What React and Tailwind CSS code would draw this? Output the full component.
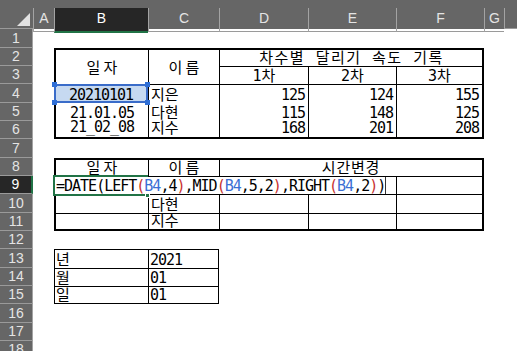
import React from "react";

const cellFont =
  "font-['DejaVu_Sans_Mono','Noto_Sans_CJK_KR',monospace] text-[15px] leading-[16px] text-black whitespace-nowrap";
const headFont = "font-['Liberation_Sans','Noto_Sans',sans-serif] text-[14px]";

const rowStart = [
  "row-start-2", "row-start-3", "row-start-4", "row-start-5", "row-start-6", "row-start-7",
  "row-start-8", "row-start-9", "row-start-10", "row-start-11", "row-start-12", "row-start-13",
  "row-start-14", "row-start-15", "row-start-16", "row-start-17", "row-start-18", "row-start-19",
];

const num = "tracking-[-1px]";
const ko = "tracking-[0px]";
const koHead = "tracking-[3.3px] pl-[3px]";

function Cell({ className = "", children }) {
  return <div className={`flex border-black ${cellFont} ${className}`}>{children}</div>;
}

function ColHead({ className = "", label, active }) {
  return (
    <div className={`row-start-1 flex flex-col bg-[#666666] pt-[8px] ${className}`}>
      <div
        className={`flex flex-1 items-center justify-center border-l border-l-[#a3a3a3] pb-[2px] ${headFont} ${
          active
            ? "bg-[#262626] text-white border-b-2 border-b-[#217346]"
            : "text-[#e4e4e4] border-b border-b-[#9a9a9a]"
        }`}
      >
        {label}
      </div>
    </div>
  );
}

function RowHead({ n }) {
  const active = n === 9;
  return (
    <div
      className={`col-start-1 flex items-center justify-center border-b border-b-[#9a9a9a] ${headFont} ${rowStart[n - 1]} ${
        active
          ? "bg-[#262626] text-white border-r-2 border-r-[#217346]"
          : "bg-[#666666] text-[#e4e4e4] border-r border-r-[#a3a3a3]"
      }`}
    >
      {n}
    </div>
  );
}

function Handle({ className }) {
  return <div className={`absolute h-[5px] w-[5px] bg-[#2f6fd6] ${className}`} />;
}

const red = "text-[#c8312f]";
const blue = "text-[#3b6fd4]";

export default function App() {
  const rows = Array.from({ length: 18 }, (_, i) => i + 1);
  return (
    <div className="grid h-[351px] w-[517px] overflow-hidden bg-white grid-cols-[33px_21px_94px_71px_89px_88px_88px_20px_1fr] grid-rows-[29px_19px_18px_18px_19px_18px_18px_19px_18px_18px_19px_18px_18px_19px_18px_18px_19px_18px_18px]">
      {/* corner */}
      <div className="col-start-1 row-start-1 flex flex-col bg-[#666666] pt-[8px]">
        <div className="flex flex-1 items-end justify-end border-b border-b-[#9a9a9a] pb-[2px] pr-[3px]">
          <svg width="13" height="13" viewBox="0 0 13 13">
            <polygon points="13,0 13,13 0,13" fill="#e2e2e2" />
          </svg>
        </div>
      </div>
      <ColHead className="col-start-2" label="A" />
      <ColHead className="col-start-3" label="B" active />
      <ColHead className="col-start-4" label="C" />
      <ColHead className="col-start-5" label="D" />
      <ColHead className="col-start-6" label="E" />
      <ColHead className="col-start-7" label="F" />
      <ColHead className="col-start-8" label="G" />
      <ColHead className="col-start-9" label="" />

      {rows.map((n) => (
        <RowHead key={n} n={n} />
      ))}

      {/* 차수별 기록 표 */}
      <Cell className={`col-start-3 row-start-3 row-span-2 border-t-2 border-l-2 items-center justify-center pt-[2px] ${koHead}`}>일자</Cell>
      <Cell className={`col-start-4 row-start-3 row-span-2 border-t-2 border-l items-center justify-center pt-[2px] ${koHead}`}>이름</Cell>
      <Cell className="col-start-5 col-span-3 row-start-3 border-t-2 border-l border-r-2 items-center justify-center tracking-[1.5px] pl-[1px]">
        차수별 달리기 속도 기록
      </Cell>
      <Cell className="col-start-5 row-start-4 border-t border-l items-center justify-center">1차</Cell>
      <Cell className="col-start-6 row-start-4 border-t border-l items-center justify-center">2차</Cell>
      <Cell className="col-start-7 row-start-4 border-t border-l border-r-2 items-center justify-center">3차</Cell>

      <Cell className={`col-start-3 row-start-5 relative bg-[#c6d9f1] items-end justify-center ${num}`}>
        20210101
        <div className="absolute inset-0 border-2 border-[#3a6cc9]" />
        <Handle className="left-[-2px] top-[-2px]" />
        <Handle className="right-[-2px] top-[-2px]" />
        <Handle className="left-[-2px] bottom-[-2px]" />
        <Handle className="right-[-2px] bottom-[-2px]" />
      </Cell>
      <Cell className={`col-start-4 row-start-5 border-t border-l items-end pl-[2px] ${ko}`}>지은</Cell>
      <Cell className={`col-start-5 row-start-5 border-t border-l items-end justify-end pr-[3px] ${num}`}>125</Cell>
      <Cell className={`col-start-6 row-start-5 border-t border-l items-end justify-end pr-[3px] ${num}`}>124</Cell>
      <Cell className={`col-start-7 row-start-5 border-t border-l border-r-2 items-end justify-end pr-[3px] ${num}`}>155</Cell>

      <Cell className={`col-start-3 row-start-6 border-l-2 items-end justify-center ${num}`}>21.01.05</Cell>
      <Cell className={`col-start-4 row-start-6 border-l items-end pl-[2px] ${ko}`}>다현</Cell>
      <Cell className={`col-start-5 row-start-6 border-l items-end justify-end pr-[3px] ${num}`}>115</Cell>
      <Cell className={`col-start-6 row-start-6 border-l items-end justify-end pr-[3px] ${num}`}>148</Cell>
      <Cell className={`col-start-7 row-start-6 border-l border-r-2 items-end justify-end pr-[3px] ${num}`}>125</Cell>

      <Cell className={`col-start-3 row-start-7 border-l-2 border-b-2 items-end justify-center pb-[2px] ${num}`}>21_02_08</Cell>
      <Cell className={`col-start-4 row-start-7 border-l border-b-2 items-end pl-[2px] pb-[1px] ${ko}`}>지수</Cell>
      <Cell className={`col-start-5 row-start-7 border-l border-b-2 items-end justify-end pr-[3px] pb-[1px] ${num}`}>168</Cell>
      <Cell className={`col-start-6 row-start-7 border-l border-b-2 items-end justify-end pr-[3px] pb-[1px] ${num}`}>201</Cell>
      <Cell className={`col-start-7 row-start-7 border-l border-r-2 border-b-2 items-end justify-end pr-[3px] pb-[1px] ${num}`}>208</Cell>

      {/* 시간변경 표 */}
      <Cell className={`col-start-3 row-start-9 border-t-2 border-l-2 items-center justify-center ${koHead}`}>일자</Cell>
      <Cell className={`col-start-4 row-start-9 border-t-2 border-l items-center justify-center ${koHead}`}>이름</Cell>
      <Cell className="col-start-5 col-span-3 row-start-9 border-t-2 border-l border-r-2 items-center justify-center tracking-[0.8px]">
        시간변경
      </Cell>

      <Cell className="col-start-3 row-start-10 relative">
        <div className="absolute left-[-1px] top-[-1px] h-[21px] w-[95px] border-2 border-[#217346]" />
        <div className={`absolute left-[1px] top-[1px] z-10 flex h-[17px] w-[331px] items-start border-r border-[#333333] bg-white pl-[1px] pt-[1px] ${num}`}>
          <span>=DATE(LEFT</span>
          <span className={red}>(</span>
          <span className={blue}>B4</span>
          <span>,4</span>
          <span className={red}>)</span>
          <span>,MID</span>
          <span className={red}>(</span>
          <span className={blue}>B4</span>
          <span>,5,2</span>
          <span className={red}>)</span>
          <span>,RIGHT</span>
          <span className={red}>(</span>
          <span className={blue}>B4</span>
          <span>,2</span>
          <span className={red}>)</span>
          <span>)</span>
        </div>
        <div className="absolute left-[91px] top-[17px] z-20 h-[5px] w-[5px] border border-white bg-[#217346]" />
      </Cell>
      <Cell className="col-start-4 row-start-10 border-t" />
      <Cell className="col-start-5 row-start-10 border-t" />
      <Cell className="col-start-6 row-start-10 border-t" />
      <Cell className="col-start-7 row-start-10 border-t border-l border-r-2" />

      <Cell className="col-start-3 row-start-11 border-t border-l-2" />
      <Cell className={`col-start-4 row-start-11 border-t border-l items-end pl-[2px] ${ko}`}>다현</Cell>
      <Cell className="col-start-5 row-start-11 border-t border-l" />
      <Cell className="col-start-6 row-start-11 border-t border-l" />
      <Cell className="col-start-7 row-start-11 border-t border-l border-r-2" />

      <Cell className="col-start-3 row-start-12 border-t border-l-2 border-b-2" />
      <Cell className={`col-start-4 row-start-12 border-t border-l border-b-2 items-end pl-[2px] ${ko}`}>지수</Cell>
      <Cell className="col-start-5 row-start-12 border-t border-l border-b-2" />
      <Cell className="col-start-6 row-start-12 border-t border-l border-b-2" />
      <Cell className="col-start-7 row-start-12 border-t border-l border-r-2 border-b-2" />

      {/* 년월일 표 */}
      <Cell className="col-start-3 row-start-14 border-t border-l items-end pl-[1px]">년</Cell>
      <Cell className={`col-start-4 row-start-14 border-t border-l border-r items-end pl-[1px] ${num}`}>2021</Cell>
      <Cell className="col-start-3 row-start-15 border-t border-l items-end pl-[1px]">월</Cell>
      <Cell className={`col-start-4 row-start-15 border-t border-l border-r items-end pl-[1px] ${num}`}>01</Cell>
      <Cell className="col-start-3 row-start-16 border-t border-l border-b items-end pl-[1px]">일</Cell>
      <Cell className={`col-start-4 row-start-16 border-t border-l border-r border-b items-end pl-[1px] ${num}`}>01</Cell>
    </div>
  );
}
